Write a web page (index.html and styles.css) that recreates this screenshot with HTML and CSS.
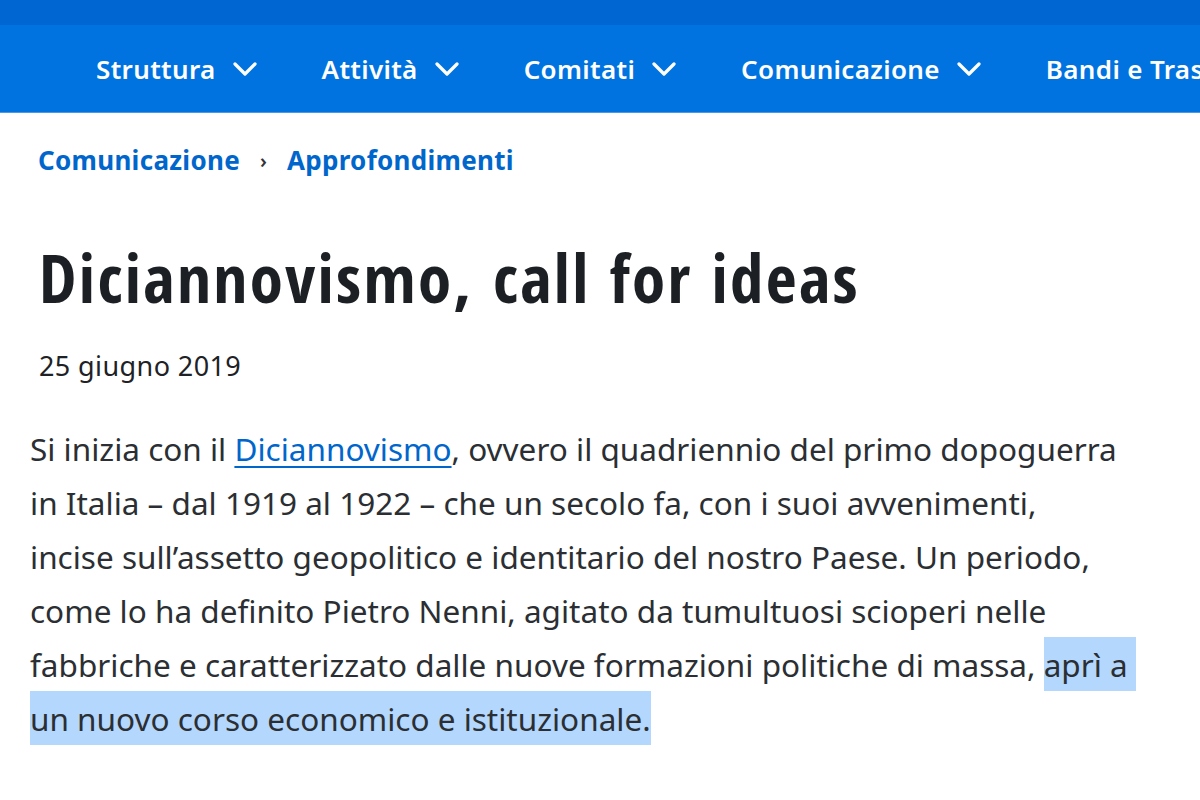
FILE: index.html
```html
<!DOCTYPE html>
<html lang="it">
<head>
<meta charset="utf-8">
<title>Diciannovismo, call for ideas</title>
<link rel="stylesheet" href="styles.css">
</head>
<body>
<div class="topbar"></div>
<nav class="nav">
  <a class="nav-item" href="#">Struttura <svg class="chev" viewBox="0 0 24 14" width="24" height="14"><polyline points="2,2 12,12 22,2"/></svg></a>
  <a class="nav-item" href="#">Attività <svg class="chev" viewBox="0 0 24 14" width="24" height="14"><polyline points="2,2 12,12 22,2"/></svg></a>
  <a class="nav-item" href="#">Comitati <svg class="chev" viewBox="0 0 24 14" width="24" height="14"><polyline points="2,2 12,12 22,2"/></svg></a>
  <a class="nav-item" href="#">Comunicazione <svg class="chev" viewBox="0 0 24 14" width="24" height="14"><polyline points="2,2 12,12 22,2"/></svg></a>
  <a class="nav-item" href="#">Bandi e Trasparenza</a>
</nav>
<main class="content">
  <div class="breadcrumb">
    <a href="#">Comunicazione</a>
    <span class="sep">›</span>
    <a href="#">Approfondimenti</a>
  </div>
  <h1 class="title">Diciannovismo, call for ideas</h1>
  <div class="date">25 giugno 2019</div>
  <p class="body">Si inizia con il <a href="#" class="link">Diciannovismo</a>, ovvero il quadriennio del primo dopoguerra<br>in Italia – dal 1919 al 1922 – che un secolo fa, con i suoi avvenimenti,<br>incise sull’assetto geopolitico e identitario del nostro Paese. Un periodo,<br>come lo ha definito Pietro Nenni, agitato da tumultuosi scioperi nelle<br>fabbriche e caratterizzato dalle nuove formazioni politiche di massa, <span class="sel">aprì a&nbsp;</span><br><span class="sel">un nuovo corso economico e istituzionale.</span></p>
</main>
</body>
</html>
```
FILE: styles.css
```css
html, body {
  margin: 0;
  padding: 0;
  background: #fff;
  overflow: hidden;
}
body {
  font-family: "Noto Sans", "Open Sans", sans-serif;
  color: #2b2f33;
}
.topbar {
  height: 25px;
  background: #0066d2;
}
.nav {
  height: 87px;
  background: #0073e0;
  border-bottom: 1px solid #4a98ea;
  display: flex;
  align-items: center;
  padding-left: 96px;
  gap: 65px;
  white-space: nowrap;
  overflow: hidden;
}
.nav-item {
  display: flex;
  align-items: center;
  flex-shrink: 0;
  gap: 17px;
  color: #fff;
  text-decoration: none;
  font-size: 26px;
  font-weight: 600;
  line-height: 40px;
  letter-spacing: 0.35px;
}
.chev {
  fill: none;
  stroke: #fff;
  stroke-width: 3.2;
  stroke-linecap: round;
  stroke-linejoin: round;
  margin-top: 1px;
}
.content {
  padding-left: 30px;
}
.breadcrumb {
  margin-top: 26px;
  padding-left: 8px;
  display: flex;
  align-items: center;
  gap: 20px;
  font-size: 26px;
  font-weight: 700;
  line-height: 40px;
}
.breadcrumb a {
  color: #0066cc;
  text-decoration: none;
  letter-spacing: 0.3px;
}
.breadcrumb .sep {
  color: #333;
  font-size: 20px;
  font-weight: 600;
  margin-top: 2px;
}
.title {
  margin: 56px 0 0;
  padding-left: 9px;
  font-family: "Open Sans Condensed", "Noto Sans", sans-serif;
  font-weight: 700;
  font-size: 67px;
  line-height: 80px;
  letter-spacing: 2.4px;
  color: #1c2024;
}
.date {
  margin-top: 31px;
  padding-left: 9px;
  font-size: 27px;
  line-height: 36px;
  letter-spacing: 0.4px;
  color: #1e2226;
}
.body {
  margin: 38px 0 0;
  font-size: 31.5px;
  line-height: 54px;
  white-space: nowrap;
  color: #2b2f33;
}
.link {
  color: #0066cc;
  text-decoration: underline;
  text-decoration-thickness: 2px;
  text-underline-offset: 5px;
}
.sel {
  background: #b4d7fd;
  padding: 6px 0 5px;
}
```
